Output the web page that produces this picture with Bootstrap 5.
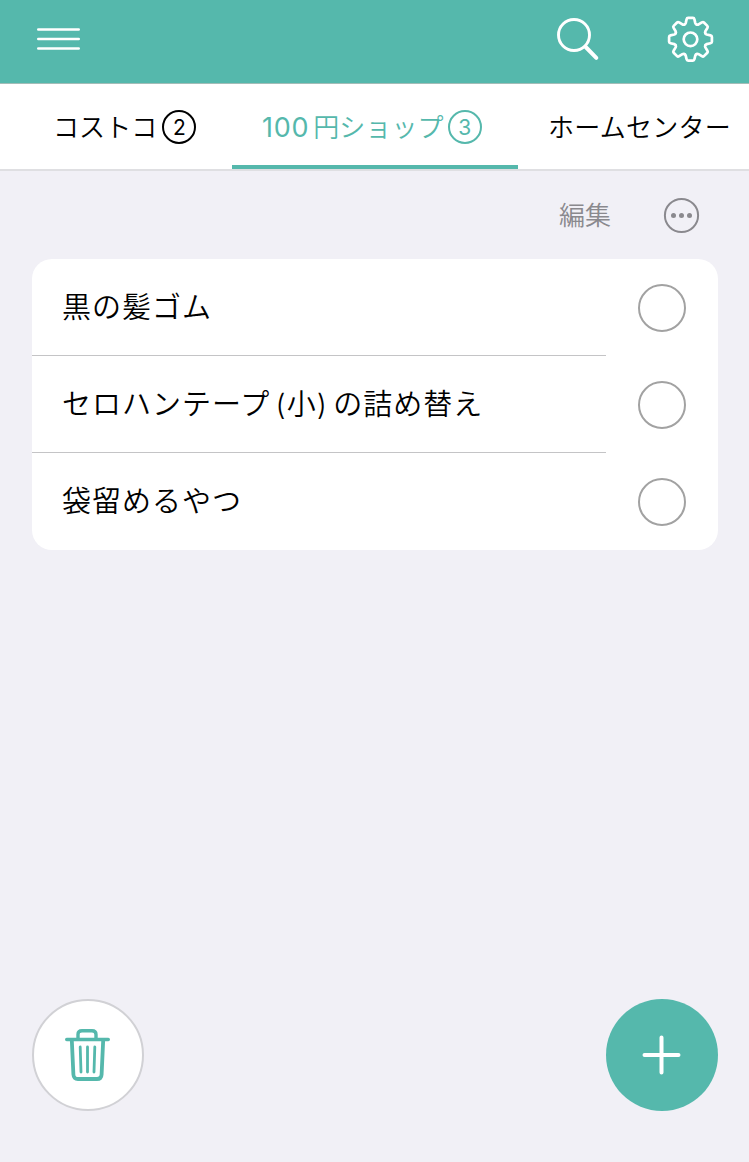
<!DOCTYPE html>
<html lang="ja">
<head>
<meta charset="utf-8">
<meta name="viewport" content="width=device-width, initial-scale=1">
<title>買い物リスト</title>
<link href="https://cdn.jsdelivr.net/npm/bootstrap@5.3.0/dist/css/bootstrap.min.css" rel="stylesheet">
<style>
:root { --mint: #55b8ac; }
body { background: #f1f0f6; color: #000; font-family: Inter, "Noto Sans CJK JP", sans-serif; font-weight: 350; height: 1162px; overflow: hidden; }
svg { display: block; fill: none; stroke-linecap: round; stroke-linejoin: round; }
button { background: none; border: 0; padding: 0; color: inherit; font-weight: inherit; }
.topbar { height: 84px; background: var(--mint); border-bottom: 1px solid #a3bdb8; color: #fff; padding: 0 33px 5px 36px; }
.topbar-tools { gap: 65px; }
.shop-tabs { height: 87px; background: #fff; border-bottom: 2px solid #dfdfe2; overflow: hidden; }
.shop-tab { height: 85px; font-size: 26px; letter-spacing: .1px; line-height: 1; white-space: nowrap; border-bottom: 4px solid transparent; padding-top: 5px; }
.tab-label { padding-top: 2px; }
.shop-tab.first { width: 232px; padding-left: 53px; }
.shop-tab.current { width: 286px; padding-left: 30px; color: var(--mint); border-color: var(--mint); }
.shop-tab.last { width: 231px; padding-left: 30px; letter-spacing: .25px; }
.tab-num { font-size: 27px; font-weight: 400; letter-spacing: .7px; margin-right: 4px; }
.count { width: 34px; height: 34px; border: 2px solid; border-radius: 50%; font-size: 21px; font-weight: 400; letter-spacing: 0; }
.first .count { margin-left: 5px; }
.current .count { margin-left: 4px; }
.listbar { height: 88px; padding-right: 49px; gap: 52px; color: #8a898e; font-size: 26px; }
.items { margin: 0 31px 0 32px; border-radius: 20px; background: #fff; overflow: hidden; }
.item-row { height: 97px; }
.item-text { height: 97px; width: 574px; padding: 0 0 0 30px; font-size: 29px; letter-spacing: 1px; word-spacing: -3.8px; line-height: 1; white-space: pre; border-bottom: 1px solid #c4c4c6; }
.item-row:last-child .item-text { border-color: transparent; }
.check { width: 48px; height: 48px; border: 2px solid #a2a2a2; border-radius: 50%; margin-left: 32px; }
.fabs { padding: 0 31px 51px 32px; }
.fab { width: 112px; height: 112px; border-radius: 50%; }
.fab-trash { background: #fff; border: 2px solid #d1d1d5; color: var(--mint); padding-bottom: 2px; }
.fab-add { background: var(--mint); color: #fff; }
</style>
</head>
<body class="d-flex flex-column">
<header class="topbar d-flex align-items-center justify-content-between flex-shrink-0">
  <button aria-label="メニュー"><svg width="45" height="24" stroke="currentColor" stroke-width="2.6"><path d="M2.3 2.5H42.7M2.3 12H42.7M2.3 21.5H42.7"/></svg></button>
  <div class="topbar-tools d-flex align-items-center">
    <button aria-label="検索"><svg width="46" height="46" stroke="currentColor"><circle cx="19" cy="19" r="15.5" stroke-width="2.9"/><path d="M30.7 31L41.3 41.8" stroke-width="4"/></svg></button>
    <button aria-label="設定"><svg width="50" height="50" viewBox="-24.5 -25.3 50 50" stroke="currentColor" stroke-width="2.7">
      <defs><path id="tooth" d="M-6.1 -14.8Q-5.2 -15 -4.8 -16.2L-3.9 -20Q-3.6 -21.4 -2.4 -21.4H2.4Q3.6 -21.4 3.9 -20L4.8 -16.2Q5.2 -15 6.1 -14.8"/></defs>
      <use href="#tooth"/><use href="#tooth" transform="rotate(45)"/><use href="#tooth" transform="rotate(90)"/><use href="#tooth" transform="rotate(135)"/><use href="#tooth" transform="rotate(180)"/><use href="#tooth" transform="rotate(225)"/><use href="#tooth" transform="rotate(270)"/><use href="#tooth" transform="rotate(315)"/>
      <circle r="6.8"/></svg></button>
  </div>
</header>
<nav class="shop-tabs d-flex flex-shrink-0">
  <div class="shop-tab first d-flex align-items-center flex-shrink-0"><span class="tab-label">コストコ</span><span class="count d-flex align-items-center justify-content-center">2</span></div>
  <div class="shop-tab current d-flex align-items-center flex-shrink-0"><span class="tab-num">100</span><span class="tab-label">円ショップ</span><span class="count d-flex align-items-center justify-content-center">3</span></div>
  <div class="shop-tab last d-flex align-items-center flex-shrink-0"><span class="tab-label">ホームセンター</span></div>
</nav>
<main class="d-flex flex-column flex-grow-1">
  <div class="listbar d-flex align-items-center justify-content-end">
    <button>編集</button>
    <button aria-label="その他"><svg width="37" height="37" stroke="currentColor" stroke-width="2"><circle cx="18.5" cy="18.5" r="16.6"/><g fill="currentColor" stroke="none"><circle cx="10.5" cy="18.5" r="2.5"/><circle cx="18.5" cy="18.5" r="2.5"/><circle cx="26.5" cy="18.5" r="2.5"/></g></svg></button>
  </div>
  <div class="items">
    <div class="item-row d-flex align-items-center"><div class="item-text d-flex align-items-center">黒の髪ゴム</div><span class="check"></span></div>
    <div class="item-row d-flex align-items-center"><div class="item-text d-flex align-items-center">セロハンテープ (小) の詰め替え</div><span class="check"></span></div>
    <div class="item-row d-flex align-items-center"><div class="item-text d-flex align-items-center">袋留めるやつ</div><span class="check"></span></div>
  </div>
  <div class="fabs d-flex justify-content-between mt-auto">
    <button class="fab fab-trash d-flex align-items-center justify-content-center" aria-label="削除"><svg width="48" height="54" stroke="currentColor" stroke-width="3.4"><path d="M2.7 12.5H44.3M14 11V7.5Q14 3.7 18 3.7H28Q32 3.7 32 7.5V11"/><path d="M7.8 13L9.4 47.5Q9.7 52 14 52H33Q37.3 52 37.6 47.5L39.2 13" stroke-width="3.8"/><path d="M16.2 20L17 45M23.5 20V45M30.8 20L30 45" stroke-width="2.8"/></svg></button>
    <button class="fab fab-add d-flex align-items-center justify-content-center" aria-label="追加"><svg width="42" height="42" stroke="currentColor" stroke-width="4"><path d="M20.5 3.5V38.5M3.5 21H37.5"/></svg></button>
  </div>
</main>
<script src="https://cdn.jsdelivr.net/npm/bootstrap@5.3.0/dist/js/bootstrap.bundle.min.js"></script>
</body>
</html>
